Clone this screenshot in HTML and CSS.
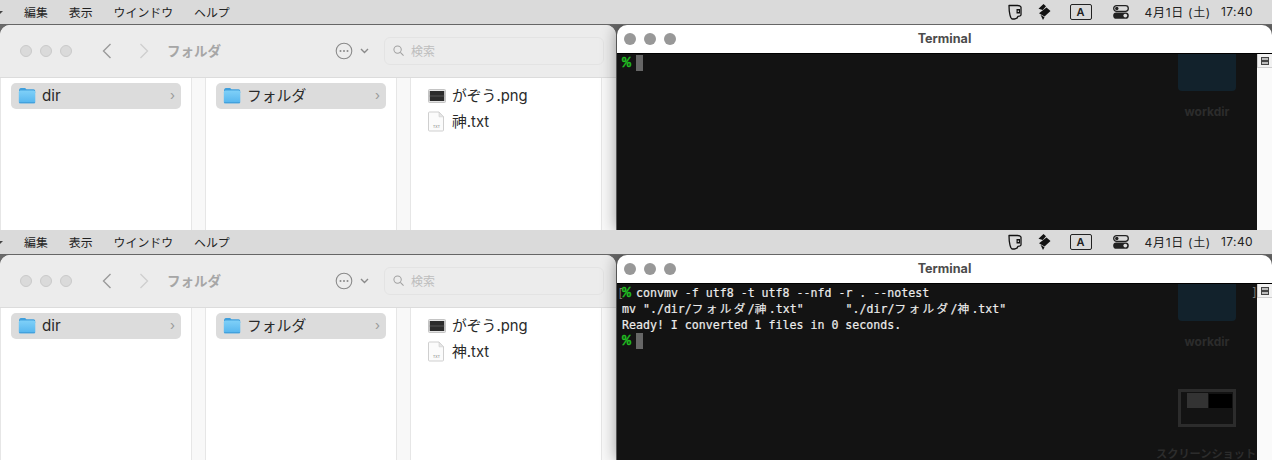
FILE: index.html
```html
<!DOCTYPE html>
<html lang="ja">
<head>
<meta charset="utf-8">
<title>convmv</title>
<link rel="stylesheet" href="styles.css">
</head>
<body>
<svg class="sprite" width="0" height="0">
  <defs>
    <linearGradient id="fg" x1="0" y1="0" x2="0" y2="1"><stop offset="0" stop-color="#7fd0f8"/><stop offset="1" stop-color="#55b5ee"/></linearGradient>
    <symbol id="folder" viewBox="0 0 18 17">
      <path d="M1 3.500C1 2 1.800 1 3 1h3.600c.8 0 1.200.7 1.800 1.200H15.500c1 0 1.700.8 1.700 1.800V6H1z" fill="#3f9fdc"/>
      <rect x="0.800" y="3.600" width="16.500" height="12.600" rx="1.600" fill="url(#fg)"/>
      <rect x="0.800" y="15.300" width="16.500" height="0.900" rx="0.400" fill="#3d9ad8"/>
    </symbol>
    <symbol id="cup" viewBox="0 0 14 16">
      <path d="M1 1.500h8.500c1.700 0 3 .6 3.500 1.500v8c-.4 1-1.600 1.300-3 1.300-.5 1.600-1.700 2.700-3.500 2.700H4.500C2.500 15 1 9 1 1.500z" fill="none" stroke="#111" stroke-width="1.300" stroke-linejoin="round"/>
      <rect x="8.500" y="5" width="3.500" height="4.500" fill="#111"/>
      <rect x="9.700" y="6.500" width="1.200" height="1.500" fill="#ddd"/>
    </symbol>
    <symbol id="stack" viewBox="0 0 14 16">
      <path d="M6.500 0 9 2.200 5.800 6 1.500 4.800zM9.500 3.500 13.500 7 7.500 12.500 2 9.200zM3.500 10.800l4 2.500-1.500 2.700z" fill="#111"/>
    </symbol>
    <symbol id="toggles" viewBox="0 0 16 14">
      <rect x="0.700" y="0.700" width="14.600" height="5.600" rx="2.800" fill="none" stroke="#222" stroke-width="1.300"/>
      <circle cx="3.800" cy="3.500" r="1.700" fill="#222"/>
      <rect x="0.200" y="7.500" width="15.600" height="6.300" rx="3.100" fill="#222"/>
      <circle cx="12.300" cy="10.600" r="1.900" fill="#ddd"/>
    </symbol>
    <symbol id="more" viewBox="0 0 18 18">
      <circle cx="9" cy="9" r="7.800" fill="none" stroke="#8a8a8a" stroke-width="1.100"/>
      <circle cx="5.500" cy="9" r="1" fill="#8a8a8a"/><circle cx="9" cy="9" r="1" fill="#8a8a8a"/><circle cx="12.500" cy="9" r="1" fill="#8a8a8a"/>
    </symbol>
    <symbol id="pngfile" viewBox="0 0 18 14">
      <rect x="0.500" y="0.500" width="17" height="13" rx="1" fill="#e4e4e4" stroke="#c4c4c4"/>
      <rect x="1.800" y="2" width="14.400" height="10" fill="#2b2b2b"/>
      <rect x="1.800" y="6.500" width="14.400" height="1" fill="#555"/>
    </symbol>
    <symbol id="txtfile" viewBox="0 0 17 21">
      <path d="M1.500 1H11l4.500 4.800V19a1 1 0 0 1-1 1h-13a1 1 0 0 1-1-1V2a1 1 0 0 1 1-1z" fill="#fbfbfb" stroke="#cfcfcf"/>
      <path d="M11 1v4.800h4.500z" fill="#e6e6e6" stroke="#cfcfcf" stroke-width="0.600"/>
      <text x="8.500" y="17" text-anchor="middle" font-size="3.600" fill="#777" font-family="Liberation Sans">TXT</text>
    </symbol>
  </defs>
</svg>

<section class="panel">
  <header class="menubar">
    <span class="menu-caret"></span>
    <nav class="menus"><span>編集</span><span>表示</span><span>ウインドウ</span><span>ヘルプ</span></nav>
    <div class="status">
      <svg class="st-cup"><use href="#cup"/></svg>
      <svg class="st-stack"><use href="#stack"/></svg>
      <span class="st-a">A</span>
      <svg class="st-toggles"><use href="#toggles"/></svg>
      <span class="st-date">4月1日 (土)</span>
      <span class="st-time">17:40</span>
    </div>
  </header>
  <div class="desk">
    <div class="finder">
      <div class="toolbar">
        <div class="lights"><i></i><i></i><i></i></div>
        <svg class="nav nav-back" viewBox="0 0 10 16"><path d="M8.500 1 1.500 8l7 7"/></svg>
        <svg class="nav nav-fwd" viewBox="0 0 10 16"><path d="M1.500 1l7 7-7 7"/></svg>
        <span class="path">フォルダ</span>
        <svg class="more"><use href="#more"/></svg>
        <svg class="more-caret" viewBox="0 0 9 6"><path d="M1 1l3.500 3.500L8 1"/></svg>
        <div class="search">
          <svg class="glass" viewBox="0 0 12 12"><circle cx="5" cy="5" r="4"/><path d="M8 8l3.500 3.500"/></svg>
          <span>検索</span>
        </div>
      </div>
      <div class="cols">
        <div class="col">
          <div class="row sel"><svg class="ic-folder"><use href="#folder"/></svg><span class="name latin">dir</span><b class="chev">›</b></div>
        </div>
        <div class="col">
          <div class="row sel"><svg class="ic-folder"><use href="#folder"/></svg><span class="name">フォルダ</span><b class="chev">›</b></div>
        </div>
        <div class="col files">
          <div class="row"><svg class="ic-png"><use href="#pngfile"/></svg><span class="name">がぞう.png</span></div>
          <div class="row"><svg class="ic-txt"><use href="#txtfile"/></svg><span class="name">&#xFA19;.txt</span></div>
        </div>
        <div class="col-end"></div>
      </div>
    </div>
    <div class="term">
      <div class="term-title"><div class="lights dark"><i></i><i></i><i></i></div><span>Terminal</span></div>
      <div class="term-body">
        <div class="ghost-folder"></div>
        <div class="ghost-label">workdir</div>
        <pre class="tty"><span class="pr">%</span> <span class="cursor"></span></pre>
        <div class="scroll"><div class="scroll-btn"><i></i></div></div>
      </div>
    </div>
  </div>
</section>

<section class="panel">
  <header class="menubar">
    <span class="menu-caret"></span>
    <nav class="menus"><span>編集</span><span>表示</span><span>ウインドウ</span><span>ヘルプ</span></nav>
    <div class="status">
      <svg class="st-cup"><use href="#cup"/></svg>
      <svg class="st-stack"><use href="#stack"/></svg>
      <span class="st-a">A</span>
      <svg class="st-toggles"><use href="#toggles"/></svg>
      <span class="st-date">4月1日 (土)</span>
      <span class="st-time">17:40</span>
    </div>
  </header>
  <div class="desk">
    <div class="finder">
      <div class="toolbar">
        <div class="lights"><i></i><i></i><i></i></div>
        <svg class="nav nav-back" viewBox="0 0 10 16"><path d="M8.500 1 1.500 8l7 7"/></svg>
        <svg class="nav nav-fwd" viewBox="0 0 10 16"><path d="M1.500 1l7 7-7 7"/></svg>
        <span class="path">フォルダ</span>
        <svg class="more"><use href="#more"/></svg>
        <svg class="more-caret" viewBox="0 0 9 6"><path d="M1 1l3.500 3.500L8 1"/></svg>
        <div class="search">
          <svg class="glass" viewBox="0 0 12 12"><circle cx="5" cy="5" r="4"/><path d="M8 8l3.500 3.500"/></svg>
          <span>検索</span>
        </div>
      </div>
      <div class="cols">
        <div class="col">
          <div class="row sel"><svg class="ic-folder"><use href="#folder"/></svg><span class="name latin">dir</span><b class="chev">›</b></div>
        </div>
        <div class="col">
          <div class="row sel"><svg class="ic-folder"><use href="#folder"/></svg><span class="name">フォルダ</span><b class="chev">›</b></div>
        </div>
        <div class="col files">
          <div class="row"><svg class="ic-png"><use href="#pngfile"/></svg><span class="name">がぞう.png</span></div>
          <div class="row"><svg class="ic-txt"><use href="#txtfile"/></svg><span class="name">神.txt</span></div>
        </div>
        <div class="col-end"></div>
      </div>
    </div>
    <div class="term">
      <div class="term-title"><div class="lights dark"><i></i><i></i><i></i></div><span>Terminal</span></div>
      <div class="term-body">
        <div class="ghost-folder"></div>
        <div class="ghost-label">workdir</div>
        <div class="ghost-thumb"><i class="gt-a"></i><i class="gt-b"></i></div>
        <div class="ghost-label shot">スクリーンショット</div>
        <span class="br-left">[</span><span class="br-right">]</span>
        <pre class="tty"><span class="pr">%</span> convmv -f utf8 -t utf8 --nfd -r . --notest
mv "./dir/<span class="w">フォルダ</span>/<span class="w">&#xFA19;</span>.txt"      "./dir/<span class="w">フォルダ</span>/<span class="w">神</span>.txt"
Ready! I converted 1 files in 0 seconds.
<span class="pr">%</span> <span class="cursor"></span></pre>
        <div class="scroll"><div class="scroll-btn"><i></i></div></div>
      </div>
    </div>
  </div>
</section>
</body>
</html>
```

FILE: styles.css
```css
* { box-sizing: border-box; }
html, body { margin: 0; padding: 0; }
body {
  width: 1272px;
  height: 460px;
  overflow: hidden;
  font-family: "Inter", "Noto Sans CJK JP", sans-serif;
  background: #666;
}
.sprite { position: absolute; }
.panel {
  height: 230px;
  display: flex;
  flex-direction: column;
  overflow: hidden;
  background: #6a6a6a;
}

/* menu bar */
.menubar {
  flex: none;
  height: 25px;
  display: flex;
  align-items: center;
  background: #dadada;
  border-bottom: 1px solid #666;
  font-size: 12px;
  color: #222;
  padding-bottom: 1px;
}
.menu-caret {
  width: 3px;
  height: 3px;
  margin-top: 1px;
  border-top: 3px solid #444;
  border-right: 3px solid transparent;
}
.menus { display: flex; gap: 21px; margin-left: 21px; margin-top: -1px; font-size: 11.900px; }
.status { margin-left: auto; display: flex; align-items: center; height: 24px; }
.st-cup { width: 14px; height: 16px; margin-right: 15px; }
.st-stack { width: 14px; height: 16px; margin-right: 19px; }
.st-a {
  width: 22px;
  height: 16px;
  border: 1px solid #222;
  border-radius: 2px;
  font-size: 11px;
  font-weight: 600;
  line-height: 14px;
  text-align: center;
  margin-right: 21px;
}
.st-toggles { width: 16px; height: 14px; margin-right: 16px; }
.st-date { margin-right: 10px; margin-top: -1px; white-space: pre; letter-spacing: .7px; }
.st-time { margin-right: 19px; margin-top: -1px; letter-spacing: .4px; }

/* desktop */
.desk { flex: 1; display: flex; min-height: 0; overflow: hidden; }

/* finder */
.finder {
  width: 616px;
  flex: none;
  display: flex;
  flex-direction: column;
  background: #fff;
  border-radius: 10px 10px 0 0;
  overflow: hidden;
}
.toolbar {
  height: 53px;
  flex: none;
  display: flex;
  align-items: center;
  background: #ececec;
  border-bottom: 1px solid #dcdcdc;
  padding-left: 20px;
}
.lights { display: flex; gap: 8px; }
.lights i {
  width: 12px;
  height: 12px;
  border-radius: 50%;
  background: #dadada;
  border: 1px solid #cacaca;
}
.lights.dark i { background: #989898; border: 0; }
.nav { width: 10px; height: 16px; fill: none; stroke: #9a9a9a; stroke-width: 1.400; }
.nav-back { margin-left: 30px; }
.nav-fwd { margin-left: 27px; stroke: #cfcfcf; }
.path { margin-left: 18px; margin-top: -2px; font-size: 13.500px; font-weight: 700; color: #a6a6a6; white-space: nowrap; width: 168px; }
.more { width: 18px; height: 18px; margin-top: -1px; }
.more-caret { width: 9px; height: 6px; margin-left: 7px; fill: none; stroke: #8a8a8a; stroke-width: 1.400; }
.search {
  width: 220px;
  height: 28px;
  margin-left: 15px;
  margin-top: -1px;
  display: flex;
  align-items: center;
  gap: 7px;
  padding-left: 8px;
  border: 1px solid #e3e3e3;
  border-radius: 6px;
  font-size: 12px;
  color: #bdbdbd;
}
.glass { width: 11px; height: 11px; fill: none; stroke: #a0a0a0; stroke-width: 1.100; }

.cols { flex: 1; display: flex; min-height: 0; background: #fff; }
.col {
  width: 205px;
  flex: none;
  padding: 5px 10px 0 11px;
  display: flex;
  flex-direction: column;
  background:
    linear-gradient(#e6e6e6, #e6e6e6) 0 0 / 1px 100% no-repeat,
    linear-gradient(to right, #fff 0, #fff 191px, #e6e6e6 191px, #e6e6e6 192px, #f8f8f8 192px);
}
.col .row { width: 170px; }
.col-end {
  flex: 1;
  background: #f8f8f8;
  border-left: 1px solid #e6e6e6;
}
.row {
  height: 26px;
  display: flex;
  align-items: center;
  font-size: 14.800px;
  color: #2a2a2a;
  border-radius: 5px;
  padding-left: 7px;
}
.row.sel { background: #dcdcdc; }
.name { margin-left: 6px; margin-top: -3px; }
.name.latin { margin-top: -2px; font-size: 15.200px; }
.ic-folder { width: 18px; height: 17px; margin-top: -2px; flex: none; }
.chev {
  margin-left: auto;
  margin-right: 6px;
  margin-top: -2px;
  font-weight: 400;
  font-size: 13px;
  color: #999;
}
.col.files { width: 191px; background: linear-gradient(#e6e6e6, #e6e6e6) 0 0 / 1px 100% no-repeat, #fff; }
.ic-png { width: 18px; height: 14px; flex: none; margin-top: -1px; }
.ic-txt { width: 17px; height: 21px; flex: none; margin-right: 1px; margin-top: -2px; }

/* terminal */
.term {
  flex: 1;
  display: flex;
  flex-direction: column;
  position: relative;
  border-radius: 10px 10px 0 0;
  min-width: 0;
  margin-left: 1px;
  box-shadow: 0 0 16px rgba(0, 0, 0, .42);
}
.term-title {
  height: 29px;
  flex: none;
  background: #fff;
  border-bottom: 1px solid #000;
  border-radius: 10px 10px 0 0;
  padding-bottom: 2px;
  display: flex;
  align-items: center;
  justify-content: center;
  font-size: 12.600px;
  font-weight: 700;
  color: #4c4c4c;
  position: relative;
}
.term-title .lights { position: absolute; left: 7px; top: 8px; }
.term-body {
  flex: 1;
  position: relative;
  display: flex;
  background: #131313;
  overflow: hidden;
}
.tty {
  flex: 1;
  margin: 0;
  padding: 1px 0 0 5px;
  font-family: "DejaVu Sans Mono", "Noto Sans CJK JP", monospace;
  font-size: 11.600px;
  line-height: 16px;
  color: #ececec;
  -webkit-text-stroke: .2px #ececec;
  position: relative;
}
.pr {
  display: inline-block;
  width: 7px;
  color: #22c022;
  font-family: "Liberation Mono", monospace;
  font-weight: 700;
  font-size: 15px;
  line-height: 10px;
  -webkit-text-stroke: .3px #22c022;
}
.w { letter-spacing: 2.400px; line-height: 10px; }
.cursor {
  display: inline-block;
  width: 7px;
  height: 16px;
  background: #666;
  vertical-align: top;
}
.scroll { width: 15px; flex: none; background: #fafafa; position: relative; }
.scroll-btn {
  height: 14px;
  border: 1px solid #cfcfcf;
  border-width: 0 0 1px 1px;
  background: #f2f2f2;
  display: flex;
  align-items: center;
  justify-content: center;
}
.scroll-btn i {
  width: 8px;
  height: 8px;
  border: 1px solid #444;
  background: linear-gradient(#444, #444) center / 100% 2px no-repeat, #bbb;
}

/* desktop showing through the translucent terminal */
.ghost-folder {
  position: absolute;
  left: 561px;
  top: 0;
  width: 58px;
  height: 37px;
  border-radius: 0 0 4px 4px;
  background: #12222c;
}
.ghost-label {
  position: absolute;
  left: 540px;
  width: 100px;
  top: 50px;
  text-align: center;
  font-size: 12px;
  font-weight: 700;
  color: #2c2c2c;
  white-space: nowrap;
}
.ghost-label.shot { top: 161px; left: 539px; width: 100px; font-size: 11.200px; }
.ghost-thumb {
  position: absolute;
  left: 561px;
  top: 105px;
  width: 58px;
  height: 38px;
  border: 3px solid #2c2c2c;
}
.gt-a { position: absolute; left: 6px; top: 1px; width: 21px; height: 15px; background: #333; }
.gt-b { position: absolute; left: 28px; top: 2px; width: 23px; height: 14px; background: #000; }
.br-left { position: absolute; left: 0; top: 1px; font: 11.600px/16px "DejaVu Sans Mono", monospace; color: #777; }
.br-right { position: absolute; left: 634px; top: 0; font: 11.600px/16px "DejaVu Sans Mono", monospace; color: #777; }
```
